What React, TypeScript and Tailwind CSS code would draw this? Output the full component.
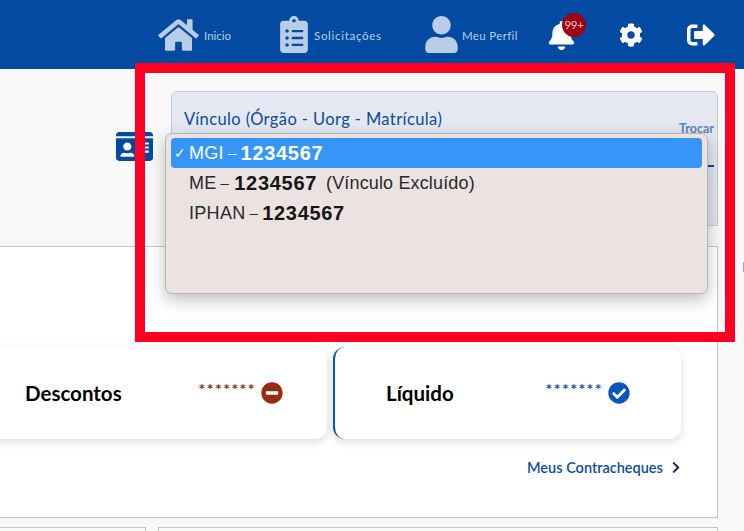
import {
  FaBell,
  FaCheckCircle,
  FaChevronRight,
  FaClipboardList,
  FaCog,
  FaHome,
  FaIdCard,
  FaMinusCircle,
  FaSignOutAlt,
  FaUser,
} from 'react-icons/fa';

const uiFont = "font-['Lato','Open_Sans',sans-serif]";
const menuFont = "font-['Liberation_Sans',Arial,sans-serif]";

function Header() {
  return (
    <header className="flex h-[69px] items-center bg-[#034aa2] pl-[158px]">
      <div className="flex items-center text-[#b9cde6]">
        <FaHome className="h-[36px] w-[41px]" />
        <span className="ml-[5px] mt-[3px] w-[28px] text-[11.5px]">Inicio</span>
      </div>
      <div className="ml-[48px] flex items-center text-[#b9cde6]">
        <FaClipboardList className="h-[37px] w-[28px]" />
        <span className="ml-[6px] mt-[3px] w-[67px] whitespace-nowrap text-[11.5px] tracking-[0.7px]">Solicitações</span>
      </div>
      <div className="ml-[44px] flex items-center text-[#b9cde6]">
        <FaUser className="h-[37px] w-[33px]" />
        <span className="ml-[4px] mt-[3px] w-[56px] whitespace-nowrap text-[11.5px] tracking-[0.35px]">Meu Perfil</span>
      </div>
      <div className="relative ml-[30px] mt-[1px] text-white">
        <FaBell className="h-[29px] w-[27px]" />
        <span className="absolute left-[14px] top-[-8px] flex h-[24px] w-[24px] items-center justify-center rounded-full bg-[#a00010] text-[11.5px] tracking-tight text-[#eccdd0]">
          99+
        </span>
      </div>
      <FaCog className="ml-[44px] h-[24px] w-[24px] text-white" />
      <FaSignOutAlt className="ml-[44px] h-[28px] w-[28px] text-white" />
    </header>
  );
}

function VinculoCard() {
  return (
    <div className="flex h-[177px] items-start">
      <FaIdCard className="ml-[116px] mt-[59px] h-[37px] w-[37px] text-[#034aa2]" />
      <div className="ml-[18px] mt-[22px] h-[135px] w-[547px] rounded-t-[6px] border border-[#c6c8cc] bg-gradient-to-b from-[#e5e9f3] to-[#dfe3e9] pl-[12px] pr-[3px] pt-[16px]">
        <p className="text-[16.5px] leading-[22px] tracking-[0.4px] text-[#0c4ba0]">Vínculo (Órgão - Uorg - Matrícula)</p>
        <p className="-mt-[8px] text-right text-[12.5px] font-bold leading-[14px] text-[#5d83bd]">Trocar</p>
        <div className="mt-[29px] h-[2px] bg-[#034aa2]" />
      </div>
    </div>
  );
}

function ResumoCard({
  title,
  value,
  valueColor,
  icon,
  className,
}: {
  title: string;
  value: string;
  valueColor: string;
  icon: React.ReactNode;
  className: string;
}) {
  return (
    <div className={`flex h-[92px] items-center rounded-xl bg-white shadow-[0_3px_8px_rgba(0,0,0,0.14)] ${className}`}>
      <span className="text-[20.5px] font-bold text-black">{title}</span>
      <span className={`ml-auto mb-[9px] text-[16px] font-bold leading-none tracking-[1.4px] ${valueColor}`}>{value}</span>
      <span className="ml-[5px]">{icon}</span>
    </div>
  );
}

function Resumo() {
  return (
    <section className="-ml-px h-[272px] w-[719px] border border-[#c5c5c5] bg-white pt-[100px]">
      <div className="-ml-[20px] flex gap-[6px]">
        <ResumoCard
          className="w-[347px] pl-[45px] pr-[44px]"
          title="Descontos"
          value="*******"
          valueColor="text-[#952d11]"
          icon={<FaMinusCircle className="h-[22px] w-[22px] text-[#952d11]" />}
        />
        <ResumoCard
          className="w-[348px] border-l-2 border-[#0b55c0] pl-[51px] pr-[51px]"
          title="Líquido"
          value="*******"
          valueColor="text-[#0b55c0]"
          icon={<FaCheckCircle className="h-[22px] w-[22px] text-[#0b55c0]" />}
        />
      </div>
      <a className="ml-[527px] mt-[18px] flex w-[154px] items-center justify-between text-[14.5px] font-semibold text-[#0b4da6]">
        Meus Contracheques
        <FaChevronRight className="h-[13px] w-[10px] text-[#14305e]" />
      </a>
    </section>
  );
}

function BottomCards() {
  return (
    <div className="mt-[9px] flex gap-[12px]">
      <div className="-ml-px h-[40px] w-[147px] border border-[#c5c5c5] bg-[#f8f8f8]" />
      <div className="h-[40px] w-[560px] border border-[#c5c5c5] bg-[#f8f8f8]" />
    </div>
  );
}

function VinculoMenu() {
  return (
    <div
      className={`absolute left-[165px] top-[133px] h-[161px] w-[543px] rounded-[7px] border border-[#b9b5b3] bg-[#ebe3e1] px-[5px] pt-[4px] shadow-[0_6px_16px_rgba(0,0,0,0.25)] ${menuFont}`}
    >
      <div className="flex h-[30px] items-center rounded-[4px] bg-[#3596f8] pl-[3px] text-[18px] tracking-[0.3px] text-white">
        <span className="w-[15px] text-[14px]">✓</span>
        <span>MGI</span>
        <span className="ml-[4px] text-[15px]">–</span>
        <b className="ml-[4px] text-[20px] tracking-[0.7px]">1234567</b>
      </div>
      <div className="flex h-[30px] items-center pl-[18px] text-[18px] tracking-[0.3px] text-[#2a2a2a]">
        <span>ME</span>
        <span className="ml-[4px] text-[15px]">–</span>
        <b className="ml-[5px] text-[20px] tracking-[0.7px] text-[#161616]">1234567</b>
        <span className="ml-[9px] tracking-[0.15px]">(Vínculo Excluído)</span>
      </div>
      <div className="flex h-[30px] items-center pl-[18px] text-[18px] tracking-[0.3px] text-[#2a2a2a]">
        <span>IPHAN</span>
        <span className="ml-[4px] text-[15px]">–</span>
        <b className="ml-[4px] text-[20px] tracking-[0.7px] text-[#161616]">1234567</b>
      </div>
    </div>
  );
}

export default function App() {
  return (
    <div className={`relative h-[531px] w-[744px] overflow-hidden bg-[#f8f8f8] ${uiFont}`}>
      <Header />
      <VinculoCard />
      <Resumo />
      <BottomCards />
      <VinculoMenu />
      {/* marcação vermelha por cima da tela */}
      <div className="absolute left-[135px] top-[63px] h-[279px] w-[600px] border-[10px] border-[#ff0022]" />
      <div className="absolute left-[743px] top-[262px] h-[10px] w-px bg-[#8fa4e0]" />
    </div>
  );
}
